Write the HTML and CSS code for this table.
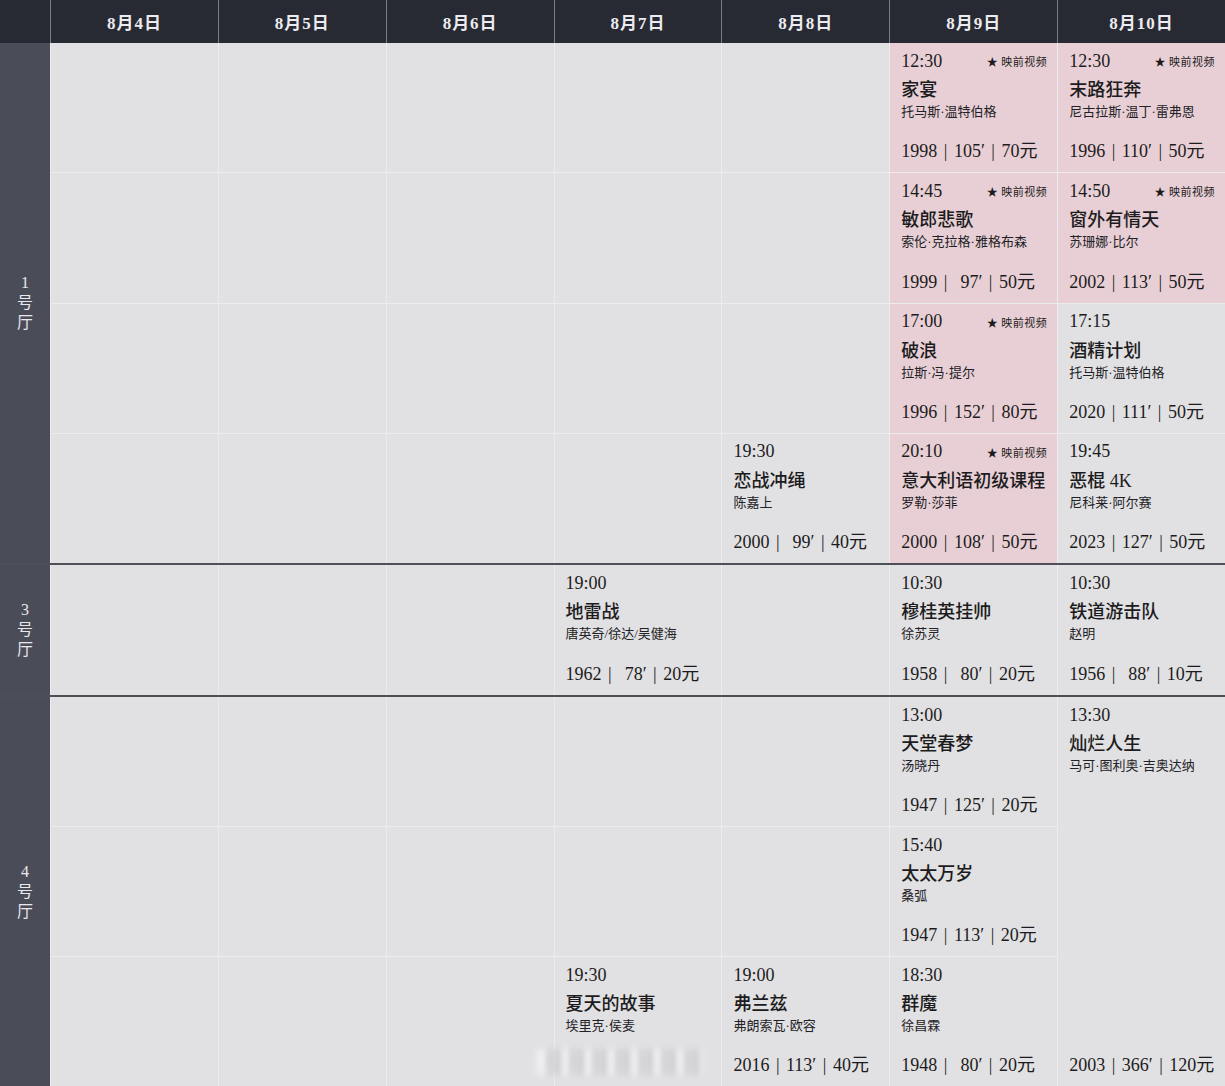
FILE: index.html
```html
<!DOCTYPE html>
<html lang="zh-CN">
<head>
  <meta charset="UTF-8">
  <title>排片表</title>
  <link rel="stylesheet" href="styles.css">
</head>
<body>
  <div class="schedule">
    <div class="head">
      <div></div>
      <div>8月4日</div>
      <div>8月5日</div>
      <div>8月6日</div>
      <div>8月7日</div>
      <div>8月8日</div>
      <div>8月9日</div>
      <div>8月10日</div>
    </div>

    <!-- 1号厅 -->
    <div class="hall hall-1">
      <div class="side"><span>1</span><span>号</span><span>厅</span></div>

      <div class="cell"></div><div class="cell"></div><div class="cell"></div><div class="cell"></div><div class="cell"></div>
      <div class="cell show pink">
        <div class="time-row"><span class="time">12:30</span><span class="tag">★ 映前视频</span></div>
        <div class="title">家宴</div>
        <div class="director">托马斯·温特伯格</div>
        <div class="info">1998 | 105′ | 70元</div>
      </div>
      <div class="cell show pink">
        <div class="time-row"><span class="time">12:30</span><span class="tag">★ 映前视频</span></div>
        <div class="title">末路狂奔</div>
        <div class="director">尼古拉斯·温丁·雷弗恩</div>
        <div class="info">1996 | 110′ | 50元</div>
      </div>

      <div class="cell"></div><div class="cell"></div><div class="cell"></div><div class="cell"></div><div class="cell"></div>
      <div class="cell show pink">
        <div class="time-row"><span class="time">14:45</span><span class="tag">★ 映前视频</span></div>
        <div class="title">敏郎悲歌</div>
        <div class="director">索伦·克拉格·雅格布森</div>
        <div class="info">1999 | &nbsp;97′ | 50元</div>
      </div>
      <div class="cell show pink">
        <div class="time-row"><span class="time">14:50</span><span class="tag">★ 映前视频</span></div>
        <div class="title">窗外有情天</div>
        <div class="director">苏珊娜·比尔</div>
        <div class="info">2002 | 113′ | 50元</div>
      </div>

      <div class="cell"></div><div class="cell"></div><div class="cell"></div><div class="cell"></div><div class="cell"></div>
      <div class="cell show pink">
        <div class="time-row"><span class="time">17:00</span><span class="tag">★ 映前视频</span></div>
        <div class="title">破浪</div>
        <div class="director">拉斯·冯·提尔</div>
        <div class="info">1996 | 152′ | 80元</div>
      </div>
      <div class="cell show">
        <div class="time-row"><span class="time">17:15</span></div>
        <div class="title">酒精计划</div>
        <div class="director">托马斯·温特伯格</div>
        <div class="info">2020 | 111′ | 50元</div>
      </div>

      <div class="cell"></div><div class="cell"></div><div class="cell"></div><div class="cell"></div>
      <div class="cell show">
        <div class="time-row"><span class="time">19:30</span></div>
        <div class="title">恋战冲绳</div>
        <div class="director">陈嘉上</div>
        <div class="info">2000 | &nbsp;99′ | 40元</div>
      </div>
      <div class="cell show pink">
        <div class="time-row"><span class="time">20:10</span><span class="tag">★ 映前视频</span></div>
        <div class="title">意大利语初级课程</div>
        <div class="director">罗勒·莎菲</div>
        <div class="info">2000 | 108′ | 50元</div>
      </div>
      <div class="cell show">
        <div class="time-row"><span class="time">19:45</span></div>
        <div class="title">恶棍 4K</div>
        <div class="director">尼科莱·阿尔赛</div>
        <div class="info">2023 | 127′ | 50元</div>
      </div>
    </div>

    <!-- 3号厅 -->
    <div class="hall hall-3">
      <div class="side"><span>3</span><span>号</span><span>厅</span></div>
      <div class="cell"></div><div class="cell"></div><div class="cell"></div>
      <div class="cell show">
        <div class="time-row"><span class="time">19:00</span></div>
        <div class="title">地雷战</div>
        <div class="director">唐英奇/徐达/吴健海</div>
        <div class="info">1962 | &nbsp;78′ | 20元</div>
      </div>
      <div class="cell"></div>
      <div class="cell show">
        <div class="time-row"><span class="time">10:30</span></div>
        <div class="title">穆桂英挂帅</div>
        <div class="director">徐苏灵</div>
        <div class="info">1958 | &nbsp;80′ | 20元</div>
      </div>
      <div class="cell show">
        <div class="time-row"><span class="time">10:30</span></div>
        <div class="title">铁道游击队</div>
        <div class="director">赵明</div>
        <div class="info">1956 | &nbsp;88′ | 10元</div>
      </div>
    </div>

    <!-- 4号厅 -->
    <div class="hall hall-4">
      <div class="side"><span>4</span><span>号</span><span>厅</span></div>

      <div class="cell"></div><div class="cell"></div><div class="cell"></div><div class="cell"></div><div class="cell"></div>
      <div class="cell show">
        <div class="time-row"><span class="time">13:00</span></div>
        <div class="title">天堂春梦</div>
        <div class="director">汤晓丹</div>
        <div class="info">1947 | 125′ | 20元</div>
      </div>
      <div class="cell show long">
        <div class="time-row"><span class="time">13:30</span></div>
        <div class="title">灿烂人生</div>
        <div class="director">马可·图利奥·吉奥达纳</div>
        <div class="info">2003 | 366′ | 120元</div>
      </div>

      <div class="cell"></div><div class="cell"></div><div class="cell"></div><div class="cell"></div><div class="cell"></div>
      <div class="cell show">
        <div class="time-row"><span class="time">15:40</span></div>
        <div class="title">太太万岁</div>
        <div class="director">桑弧</div>
        <div class="info">1947 | 113′ | 20元</div>
      </div>

      <div class="cell"></div><div class="cell"></div><div class="cell"></div>
      <div class="cell show">
        <div class="time-row"><span class="time">19:30</span></div>
        <div class="title">夏天的故事</div>
        <div class="director">埃里克·侯麦</div>
        <div class="blur-mark"></div>
      </div>
      <div class="cell show">
        <div class="time-row"><span class="time">19:00</span></div>
        <div class="title">弗兰兹</div>
        <div class="director">弗朗索瓦·欧容</div>
        <div class="info">2016 | 113′ | 40元</div>
      </div>
      <div class="cell show">
        <div class="time-row"><span class="time">18:30</span></div>
        <div class="title">群魔</div>
        <div class="director">徐昌霖</div>
        <div class="info">1948 | &nbsp;80′ | 20元</div>
      </div>
    </div>
  </div>
</body>
</html>
```

FILE: styles.css
```css
:root {
  --head-bg: #282a33;
  --side-bg: #4a4c58;
  --cell-bg: #e1e0e2;
  --pink: #e8cfd5;
  --line: #ececee;
  --text: #1c1c20;
}

body {
  margin: 0;
  background: var(--cell-bg);
  font-family: "Liberation Serif", "Noto Sans CJK SC", serif;
  color: var(--text);
}

.schedule {
  width: 1225px;
}

.head {
  display: grid;
  grid-template-columns: 50px repeat(7, 1fr);
  gap: 1px;
  height: 43px;
  background: #7a7b83;
}

.head div {
  background: var(--head-bg);
  color: #ecebef;
  display: flex;
  align-items: center;
  justify-content: center;
  font-size: 17px;
  font-weight: bold;
  letter-spacing: 1px;
}

.hall {
  display: grid;
  grid-template-columns: 50px repeat(7, 1fr);
  gap: 1px;
  background: var(--line);
  box-sizing: border-box;
  border-bottom: 2px solid #4f5057;
}

.hall-1 {
  height: 522px;
  grid-template-rows: repeat(4, 1fr);
}

.hall-3 {
  height: 132px;
  grid-template-rows: 1fr;
}

.hall-4 {
  height: 389px;
  grid-template-rows: repeat(3, 1fr);
  border-bottom: none;
}

.side {
  grid-row: 1 / -1;
  background: var(--side-bg);
  color: #e8e8ec;
  display: flex;
  flex-direction: column;
  align-items: center;
  justify-content: center;
  font-size: 16px;
  line-height: 20px;
}

.cell {
  background: var(--cell-bg);
}

.show {
  display: flex;
  flex-direction: column;
  padding: 8px 10px 9px 11px;
  position: relative;
}

.pink {
  background: var(--pink);
}

.long {
  grid-row: span 3;
}

.time-row {
  display: flex;
  justify-content: space-between;
  align-items: center;
  height: 20px;
}

.time {
  font-size: 18px;
}

.tag {
  font-family: "Noto Sans CJK SC", sans-serif;
  font-size: 11px;
  letter-spacing: 0.5px;
}

.title {
  font-size: 18px;
  font-weight: 500;
  line-height: 28px;
  margin-top: 5px;
}

.director {
  font-size: 13px;
  line-height: 16px;
  color: #222226;
}

.info {
  margin-top: auto;
  font-size: 18px;
  line-height: 24px;
  word-spacing: 2px;
  white-space: nowrap;
}

/* blurred watermark over the 夏天的故事 info line */
.blur-mark {
  position: absolute;
  left: -18px;
  top: 92px;
  width: 165px;
  height: 26px;
  background: repeating-linear-gradient(90deg, #f6f6f7 0 10px, #b4b4b8 10px 13px, #dcdcdf 13px 20px, #a8a8ad 20px 23px);
  filter: blur(3px);
  opacity: 0.75;
}
```
